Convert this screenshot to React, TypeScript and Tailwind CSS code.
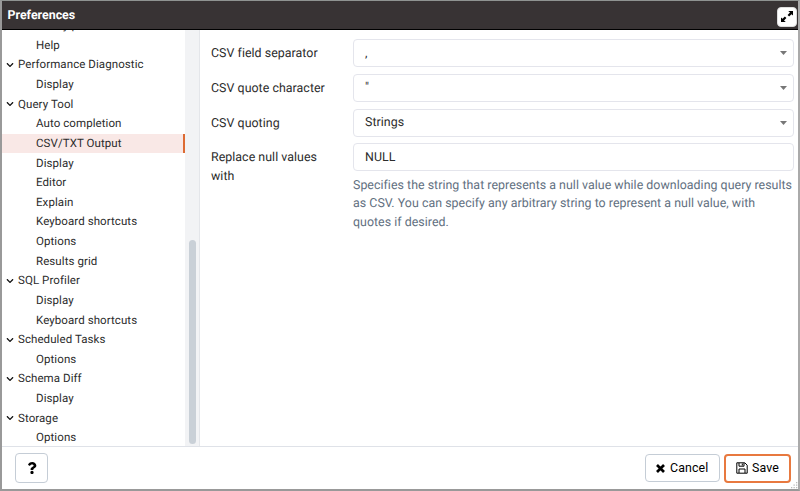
import { FaChevronDown, FaQuestion } from "react-icons/fa";

type Row = { label: string; group?: boolean; selected?: boolean };

const rows: Row[] = [
  { label: "Binary paths" },
  { label: "Help" },
  { label: "Performance Diagnostic", group: true },
  { label: "Display" },
  { label: "Query Tool", group: true },
  { label: "Auto completion" },
  { label: "CSV/TXT Output", selected: true },
  { label: "Display" },
  { label: "Editor" },
  { label: "Explain" },
  { label: "Keyboard shortcuts" },
  { label: "Options" },
  { label: "Results grid" },
  { label: "SQL Profiler", group: true },
  { label: "Display" },
  { label: "Keyboard shortcuts" },
  { label: "Scheduled Tasks", group: true },
  { label: "Options" },
  { label: "Schema Diff", group: true },
  { label: "Display" },
  { label: "Storage", group: true },
  { label: "Options" },
];

function TreeRow({ label, group, selected }: Row) {
  return (
    <div
      className={`flex h-[19.63px] shrink-0 items-center text-[11.5px] tracking-[0.08px] ${
        group ? "pl-[4px]" : "pl-[34px]"
      } ${selected ? "border-r-[2px] border-[#dd6b33] bg-[#f9e8e6]" : ""}`}
    >
      {group && <FaChevronDown className="mr-[4px] size-2 text-[#111]" />}
      <span className="pt-[0.5px] whitespace-nowrap">{label}</span>
    </div>
  );
}

function Field({ label, value, select, help }: { label: string; value: string; select?: boolean; help?: string }) {
  return (
    <div className="flex">
      <div className="w-[142px] shrink-0 pt-[6px] pr-5 text-[12.4px] leading-[18.7px] tracking-[0.04px]">{label}</div>
      <div className="w-[441px] shrink-0">
        <div className="flex h-[28px] items-center justify-between rounded-[4px] border border-[#e4e5ec] pr-[6px] pl-[11px] text-[12.4px] tracking-[0.04px]">
          <span className="pt-[2px]">{value}</span>
          {select && (
            <svg className="h-[4px] w-[7px]" viewBox="0 0 7 4">
              <path d="M0 0h7L3.5 4z" fill="#777" />
            </svg>
          )}
        </div>
        {help && (
          <p className="pt-[5.3px] text-[12.4px] leading-[18.7px] tracking-[0.03px] whitespace-pre text-[#62707f]">{help}</p>
        )}
      </div>
    </div>
  );
}

export default function App() {
  return (
    <div className="relative flex h-[491px] w-[800px] flex-col overflow-hidden border-t border-r-2 border-b-2 border-l-2 border-t-[#8f9391] border-r-[#aaa] border-b-[#999] border-l-[#999] bg-white font-['Roboto',sans-serif] text-[#2c2c2c] [text-rendering:geometricPrecision]">
      <header className="flex h-[29px] shrink-0 items-center justify-between border-b border-black bg-[#383334] pr-px pl-[5.5px]">
        <h1 className="pt-[2px] text-[12.4px] font-bold text-white">Preferences</h1>
        <button className="mt-[3px] flex size-[20px] items-center justify-center rounded-[4px] border border-[#dedede] bg-white text-black">
          <svg className="h-[11px] w-[12px]" viewBox="0 0 12 11" fill="currentColor">
            <path d="M7.2 0H12v4.6l-1.5-1.4-2.4 2.2-1.5-1.5L9 1.6zM4.8 11H0V6.4l1.5 1.4L3.9 5.6l1.5 1.5L3 9.4z" />
          </svg>
        </button>
      </header>
      <main className="flex min-h-0 flex-1">
        <nav className="flex w-[183px] shrink-0 flex-col justify-end overflow-hidden">
          <div className="-mb-[1.5px] flex flex-col">
            {rows.map((row, i) => (
              <TreeRow key={i} {...row} />
            ))}
          </div>
        </nav>
        <div className="flex w-[15px] shrink-0 flex-col items-center justify-end border-r border-[#e4e6ea] bg-[#f2f3f5] pb-[2px]">
          <div className="h-[204px] w-[7px] rounded-full bg-[#c9d0d7]" />
        </div>
        <section className="flex flex-1 flex-col gap-[6.8px] pt-[9px] pl-[11px]">
          <Field label="CSV field separator" value="," select />
          <Field label="CSV quote character" value={'"'} select />
          <Field label="CSV quoting" value="Strings" select />
          <Field
            label="Replace null values with"
            value="NULL"
            help={
              "Specifies the string that represents a null value while downloading query results\nas CSV. You can specify any arbitrary string to represent a null value, with\nquotes if desired."
            }
          />
        </section>
      </main>
      <footer className="flex h-[43px] shrink-0 items-center justify-between border-t border-[#dfe2e8] pr-[7px] pl-[13px] text-[12.4px] tracking-[0.1px] text-black">
        <button className="flex h-[30px] w-[33px] items-center justify-center rounded-[4px] border border-[#c5cdd6]">
          <FaQuestion className="size-[12px]" />
        </button>
        <div className="flex items-center gap-[4px]">
          <button className="flex h-[28px] w-[75.5px] items-center justify-center gap-[5px] rounded-[4px] border border-[#c5cdd6]">
            <svg className="size-[9px]" viewBox="0 0 9 9" fill="none" stroke="currentColor" strokeWidth="2.7">
              <path d="M1 1l7 7M8 1L1 8" />
            </svg>
            <span className="pt-px">Cancel</span>
          </button>
          <button className="flex h-[29px] w-[67px] items-center justify-center gap-[4px] rounded-[4px] border-2 border-[#e8793f]">
            <svg className="size-[12px]" viewBox="0 0 12 12" fill="none" stroke="currentColor" strokeWidth="1">
              <path d="M.8.8h8L11.2 3.2v8H.8zM3 1v3.2h5V1M3 11V7h6v4M6.3 1.5v2" />
            </svg>
            <span className="pt-px">Save</span>
          </button>
        </div>
      </footer>
      <svg className="absolute right-0 bottom-0 size-[7px]" viewBox="0 0 7 7" fill="#bbb">
        <path d="M5 0h1.3v1.3H5zM2.5 2.5h1.3v1.3H2.5zM5 2.5h1.3v1.3H5zM0 5h1.3v1.3H0zM2.5 5h1.3v1.3H2.5zM5 5h1.3v1.3H5z" />
      </svg>
    </div>
  );
}
